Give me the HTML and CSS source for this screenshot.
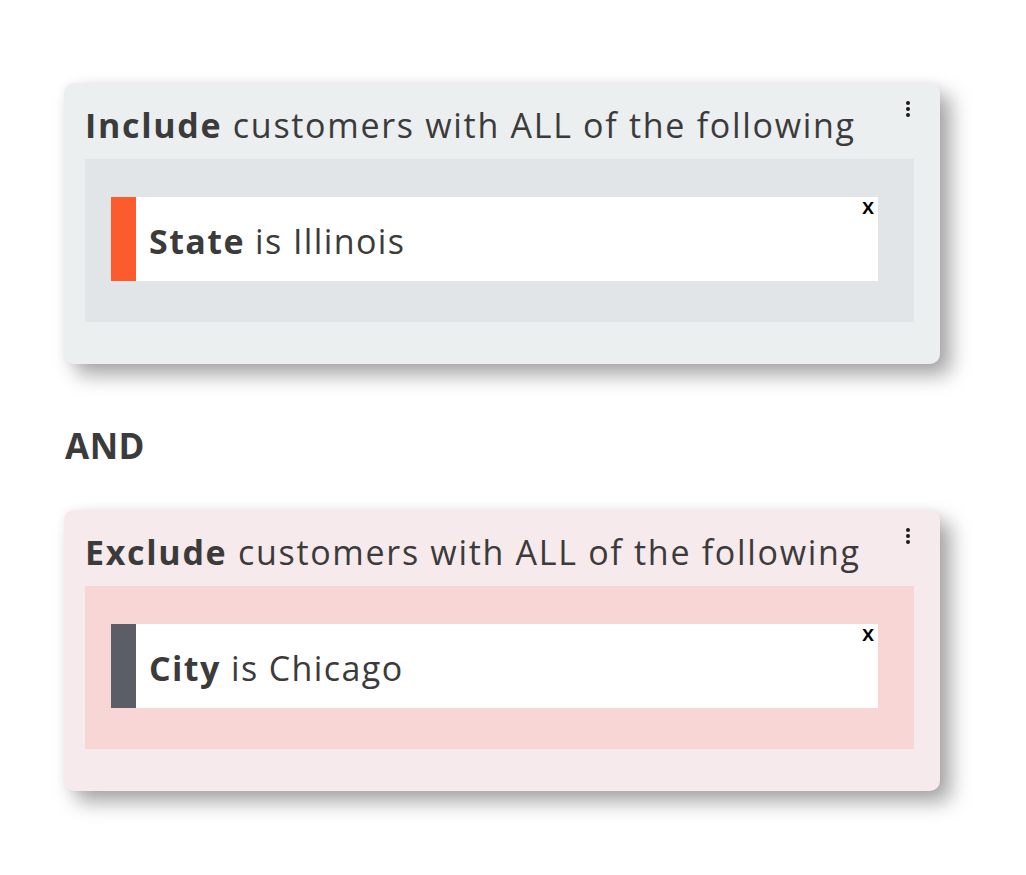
FILE: index.html
```html
<!DOCTYPE html>
<html lang="en">
<head>
    <meta charset="UTF-8">
    <meta name="viewport" content="width=device-width, initial-scale=1.0">
    <title>Customer Segment Rules</title>
    <link rel="stylesheet" href="styles.css">
</head>
<body>

    <div class="rules">
        <section class="rule-group include">
            <button class="menu-btn" aria-label="Group options">
                <span></span><span></span><span></span>
            </button>
            <h2 class="group-title"><strong>Include</strong> customers with ALL of the following</h2>
            <div class="group-body">
                <div class="condition state">
                    <span class="condition-text"><strong>State</strong> is Illinois</span>
                    <button class="remove-btn" aria-label="Remove condition">x</button>
                </div>
            </div>
        </section>

        <div class="joiner">AND</div>

        <section class="rule-group exclude">
            <button class="menu-btn" aria-label="Group options">
                <span></span><span></span><span></span>
            </button>
            <h2 class="group-title"><strong>Exclude</strong> customers with ALL of the following</h2>
            <div class="group-body">
                <div class="condition city">
                    <span class="condition-text"><strong>City</strong> is Chicago</span>
                    <button class="remove-btn" aria-label="Remove condition">x</button>
                </div>
            </div>
        </section>
    </div>

</body>
</html>
```

FILE: styles.css
```css
:root {
    --text-color: #3b3b3b;
    --include-bg: #eceff0;
    --include-inner: #e1e5e8;
    --exclude-bg: #f7eaec;
    --exclude-inner: #f8d6d6;
    --orange: #fc5b2d;
    --slate: #5b5e66;
}

* { margin: 0; padding: 0; box-sizing: border-box; }

body {
    font-family: 'Open Sans', 'Liberation Sans', sans-serif;
    color: var(--text-color);
    background: #fff;
    min-height: 875px;
}

.rules {
    width: 876px;
    margin-left: 64px;
    padding: 83px 0 85px;
}

.rule-group {
    position: relative;
    height: 281px;
    border-radius: 10px;
    padding: 20px 26px 0 21px;
    box-shadow: 0 0 10px rgba(0, 0, 0, 0.05), 11px 11px 20px rgba(0, 0, 0, 0.35);
}
.rule-group.include { background-color: var(--include-bg); }
.rule-group.exclude { background-color: var(--exclude-bg); }

.group-title {
    font-size: 34px;
    font-weight: 400;
    line-height: 44px;
    letter-spacing: 1.7px;
    margin-bottom: 12px;
}
.group-title strong,
.condition-text strong,
.joiner { font-weight: 700; }

.group-body { padding: 38px 36px 41px 26px; }
.include .group-body { background-color: var(--include-inner); }
.exclude .group-body { background-color: var(--exclude-inner); }

.condition {
    position: relative;
    display: flex;
    align-items: center;
    height: 84px;
    background: #fff;
    padding-left: 13px;
    border-left: 25px solid var(--orange);
}
.condition.city { border-left-color: var(--slate); }
.condition-text { font-size: 34px; letter-spacing: 1.4px; padding-top: 4px; }

.remove-btn {
    position: absolute;
    top: -7px;
    right: 4px;
    background: none;
    border: none;
    font-family: 'Open Sans', sans-serif;
    font-size: 22px;
    font-weight: 600;
    color: #000;
    cursor: pointer;
}

.menu-btn {
    position: absolute;
    top: 18px;
    right: 30px;
    display: flex;
    flex-direction: column;
    gap: 2px;
    background: none;
    border: none;
    cursor: pointer;
}
.menu-btn span {
    width: 4px;
    height: 4px;
    border-radius: 50%;
    background: #1a1a1a;
}

.joiner {
    font-size: 35px;
    line-height: 40px;
    margin: 62px 0 44px 1px;
    letter-spacing: 0.5px;
}
```
